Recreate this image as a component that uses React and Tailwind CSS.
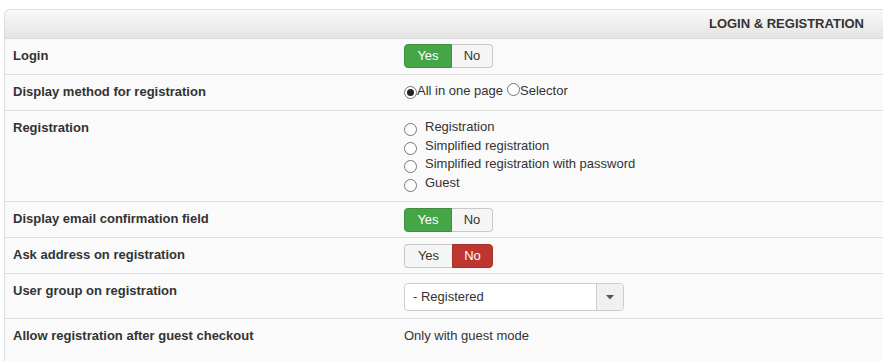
import React from 'react'

const FONT = { fontFamily: '"Liberation Sans", Arial, sans-serif' }

function Radio({ checked }) {
  return (
    <span className="inline-flex w-[13px] h-[13px] flex-shrink-0 rounded-full border border-[#767676] bg-white items-center justify-center">
      {checked && <span className="w-[7px] h-[7px] rounded-full bg-[#222]" />}
    </span>
  )
}

function Toggle({ value }) {
  const yesOn = value === 'yes'
  return (
    <div className="flex h-[24px] text-[13px] leading-[22px]">
      <span
        className={`w-[48px] text-center rounded-l-[4px] border ${
          yesOn ? 'bg-[#46a546] border-[#3d8f3d] text-white' : 'bg-[#f5f5f5] border-[#c8c8c8] border-r-0 text-[#333]'
        }`}
      >
        Yes
      </span>
      <span
        className={`w-[41px] text-center rounded-r-[4px] border ${
          !yesOn ? 'bg-[#bd362f] border-[#a4302a] text-white' : 'bg-[#f5f5f5] border-[#c8c8c8] border-l-0 text-[#333]'
        }`}
      >
        No
      </span>
    </div>
  )
}

function Row({ label, children, valuePad = 'pt-[5px] pb-[5px]', last }) {
  return (
    <div className={`flex ${last ? '' : 'border-b border-[#dddddd]'}`}>
      <div className="w-[399px] pl-[8px] pt-[8px] text-[13px] leading-[18px] font-bold text-[#333]">{label}</div>
      <div className={`flex-1 ${valuePad}`}>{children}</div>
    </div>
  )
}

export default function App() {
  return (
    <div className="bg-white w-[883px] h-[361px] overflow-hidden pt-[9px] pl-[4px]" style={FONT}>
      <div className="border border-r-0 border-b-0 border-[#dddddd] rounded-tl-[6px] bg-[#fafafa] h-[360px]">
        {/* Header */}
        <div className="h-[29px] border-b border-[#dddddd] rounded-tl-[6px] bg-gradient-to-b from-[#f9f9f9] to-[#e4e4e4] flex items-center justify-end pr-[19px]">
          <span className="text-[13px] font-bold text-[#333] uppercase">Login &amp; Registration</span>
        </div>

        <Row label="Login" valuePad="pt-[5px] pb-[6px]">
          <Toggle value="yes" />
        </Row>

        <Row label="Display method for registration" valuePad="pt-[7px] pb-[10px]">
          <div className="flex items-end text-[13px] leading-[18px] text-[#333]">
            <span className="mb-[-1px]"><Radio checked /></span>
            <span>All in one page</span>
            <span className="ml-[4px] mb-[-1px]"><Radio /></span>
            <span>Selector</span>
          </div>
        </Row>

        <Row label="Registration" valuePad="pt-[7px] pb-[9px]">
          <div className="text-[13px] text-[#333]">
            {['Registration', 'Simplified registration', 'Simplified registration with password', 'Guest'].map((t) => (
              <div key={t} className="flex h-[18.5px] leading-[18px]">
                <span className="mt-[5px]"><Radio /></span>
                <span className="ml-[8px]">{t}</span>
              </div>
            ))}
          </div>
        </Row>

        <Row label="Display email confirmation field" valuePad="pt-[6px] pb-[5px]">
          <Toggle value="yes" />
        </Row>

        <Row label="Ask address on registration" valuePad="pt-[6px] pb-[5px]">
          <Toggle value="no" />
        </Row>

        <Row label="User group on registration" valuePad="pt-[9px] pb-[7px]">
          <div className="flex w-[220px] h-[28px] border border-[#cccccc] rounded-[4px] bg-white text-[13px] text-[#333]">
            <span className="flex-1 pl-[8px] leading-[26px]">- Registered</span>
            <span className="w-[27px] border-l border-[#cccccc] bg-[#f0f0f0] rounded-r-[4px] flex items-center justify-center">
              <svg width="8" height="5" viewBox="0 0 8 5">
                <path d="M0 0 H8 L4 4.5 Z" fill="#555" />
              </svg>
            </span>
          </div>
        </Row>

        <Row label="Allow registration after guest checkout" valuePad="pt-[8px]" last>
          <div className="text-[13px] leading-[18px] text-[#333]">Only with guest mode</div>
        </Row>
      </div>
    </div>
  )
}
